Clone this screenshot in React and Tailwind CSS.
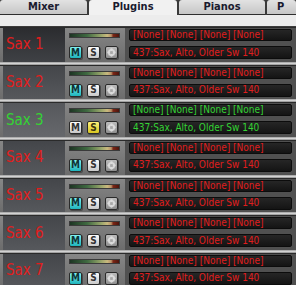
import React from "react";

const tracks = [
  { name: "Sax 1", green: false, cell: "dark" },
  { name: "Sax 2", green: false, cell: "mid" },
  { name: "Sax 3", green: true, cell: "light" },
  { name: "Sax 4", green: false, cell: "mid" },
  { name: "Sax 5", green: false, cell: "mid" },
  { name: "Sax 6", green: false, cell: "mid" },
  { name: "Sax 7", green: false, cell: "mid" },
];

const font = "font-['DejaVu_Sans_Condensed','Liberation_Sans',sans-serif]";

function FreezeIcon() {
  return (
    <svg width="9" height="9" viewBox="0 0 10 10">
      <g fill="#dcdcdc">
        <circle cx="5" cy="2" r="1.6" />
        <circle cx="5" cy="8" r="1.6" />
        <circle cx="2" cy="5" r="1.6" />
        <circle cx="8" cy="5" r="1.6" />
        <circle cx="2.9" cy="2.9" r="1.3" />
        <circle cx="7.1" cy="2.9" r="1.3" />
        <circle cx="2.9" cy="7.1" r="1.3" />
        <circle cx="7.1" cy="7.1" r="1.3" />
      </g>
      <circle cx="5" cy="5" r="1.2" fill="#a8a8a8" />
    </svg>
  );
}

function Tab({ label, active, className }) {
  if (active) {
    return (
      <div
        className={`flex items-center justify-center rounded-t-[3px] bg-[#f1f1f1] text-[11px] font-bold text-[#1a1a2e] ${className}`}
      >
        {label}
      </div>
    );
  }
  return (
    <div
      className={`flex items-center justify-center rounded-t-[3px] border-b border-[#2e2e2e] bg-[linear-gradient(#e2e2e2,#c6c6c6)] text-[11px] font-bold text-[#1a1a2e] ${className}`}
    >
      {label}
    </div>
  );
}

function TrackRow({ track }) {
  const text = track.green ? "text-[#34d334]" : "text-[#e11d1d]";
  const cellBg =
    track.cell === "dark"
      ? "bg-[linear-gradient(#2b2c2f,#3f4145)]"
      : track.cell === "light"
      ? "bg-[linear-gradient(#56585c,#66686c)]"
      : "bg-[linear-gradient(#44464a,#56585c)]";
  const mBtn = track.green
    ? "bg-[linear-gradient(#fbfbfb,#c9c9c9)] text-[#333]"
    : "bg-[linear-gradient(#7ff0f0,#1fb4bc)] text-[#0f3335]";
  const sBtn = track.green
    ? "bg-[linear-gradient(#fff27a,#d8c520)] text-[#3a3410]"
    : "bg-[linear-gradient(#fbfbfb,#c9c9c9)] text-[#333]";

  return (
    <div className="flex h-[37.67px] flex-col">
      <div className="flex flex-1 border-t border-[#2a2a2a] bg-[linear-gradient(#868686,#6c6c6c)]">
        <div className={`ml-[3px] flex w-[62px] items-center pl-[3px] ${cellBg}`}>
          <span className={`text-[15px] leading-none ${text}`}>{track.name}</span>
        </div>
        <div className="flex w-[60px] flex-col pl-[4px] pt-[5px]">
          <div className="h-[5px] w-[51px] border border-[#3a3a3a] bg-[linear-gradient(to_right,#1d3523,#3f6a41_35%,#93a268_62%,#c9b97e_76%,#b89066_84%,#7a2616_88%,#4d140c)]" />
          <div className="mt-[8px] flex gap-[5px]">
            <div
              className={`flex h-[13px] w-[13px] items-center justify-center rounded-[2px] border border-[#2b2b2b] text-[10px] font-bold leading-none shadow-[1px_1px_0_#4a4a4a] ${mBtn}`}
            >
              M
            </div>
            <div
              className={`flex h-[13px] w-[13px] items-center justify-center rounded-[2px] border border-[#2b2b2b] text-[10px] font-bold leading-none shadow-[1px_1px_0_#4a4a4a] ${sBtn}`}
            >
              S
            </div>
            <div className="flex h-[13px] w-[13px] items-center justify-center rounded-[2px] border border-[#2b2b2b] bg-[linear-gradient(#bcbcbc,#8e8e8e)] shadow-[1px_1px_0_#4a4a4a]">
              <FreezeIcon />
            </div>
          </div>
        </div>
        <div className="flex flex-1 flex-col bg-[#505050] pl-[4px] pr-[4px] pt-[1px]">
          <div
            className={`flex h-[12px] items-center rounded-[2px] border border-[#0c0c0c] bg-[linear-gradient(#262626,#141414)] pl-[3px] text-[10px] leading-none ${text}`}
          >
            [None] [None] [None] [None]
          </div>
          <div
            className={`mt-[5px] flex h-[13px] items-center rounded-[2px] border border-[#0c0c0c] bg-[linear-gradient(#262626,#141414)] pl-[3px] text-[10px] leading-none ${text}`}
          >
            437:Sax, Alto, Older Sw 140
          </div>
        </div>
      </div>
      <div className="h-[3px] bg-[linear-gradient(#9c9c9c,#d2d2d2,#8a8a8a)]" />
    </div>
  );
}

export default function App() {
  return (
    <div className={`h-[285px] w-[296px] overflow-hidden bg-[#ececec] ${font}`}>
      <div className="flex h-[15px] gap-[2px] bg-[#3a3a3a]">
        <Tab label="Mixer" className="w-[87px]" />
        <Tab label="Plugins" active className="w-[88px]" />
        <Tab label="Pianos" className="w-[86px]" />
        <Tab label="P" className="flex-1 justify-start pl-[10px]" />
      </div>
      <div className="h-[12px] border-b border-[#3c3c3c] bg-[#ececec]" />
      {tracks.map((t) => (
        <TrackRow key={t.name} track={t} />
      ))}
    </div>
  );
}
